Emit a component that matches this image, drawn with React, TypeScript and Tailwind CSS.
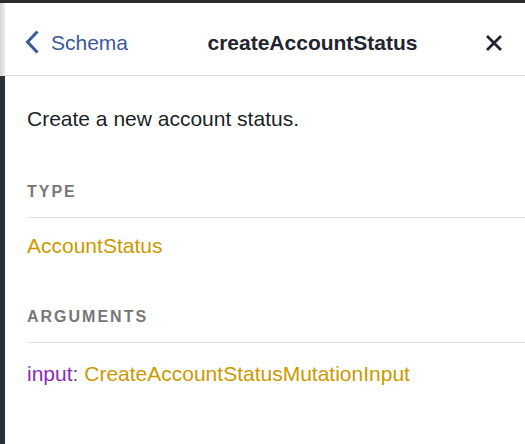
export default function App() {
  return (
    <div className="w-[525px] h-[444px] overflow-hidden bg-white flex flex-col font-['Liberation_Sans',Arial,sans-serif]">
      {/* top edge of the window behind */}
      <div className="h-[3px] bg-[#2b2b2b] shrink-0" />

      <div className="flex flex-1 min-h-0">
        {/* left strip */}
        <div className="w-[5px] flex flex-col shrink-0">
          <div className="h-[73px] bg-gradient-to-r from-[#d4d4d4] to-[#ececec]" />
          <div className="flex-1 bg-[#263238]" />
        </div>

        {/* doc explorer */}
        <div className="flex-1 flex flex-col">
          {/* header */}
          <div className="h-[73px] shrink-0 border-b border-[#dcdcdc] flex items-center pt-[6px] pl-[20px] pr-[22px]">
            <button className="flex items-center gap-[11px] text-[#3b5998] text-[21px] leading-none">
              <svg width="15" height="24" viewBox="0 0 15 24" fill="none">
                <polyline
                  points="12.5,1.5 2.5,12 12.5,22.5"
                  stroke="#3b5998"
                  strokeWidth="3"
                />
              </svg>
              Schema
            </button>
            <div className="flex-1 text-center pl-[12px] text-[21px] font-bold text-[#1f2430] leading-none">
              createAccountStatus
            </div>
            <svg width="18" height="18" viewBox="0 0 18 18" className="mt-[2px]">
              <path d="M2 2 L16 16 M16 2 L2 16" stroke="#1f2430" strokeWidth="2.8" />
            </svg>
          </div>

          {/* body */}
          <div className="pl-[22px] pt-[31px]">
            <p className="text-[21px] leading-[24px] text-[#1b1f27]">Create a new account status.</p>

            <div className="mt-[51px] pb-[15px] border-b border-[#dedede] text-[16px] leading-[20px] font-bold tracking-[2px] text-[#777777]">
              TYPE
            </div>
            <div className="mt-[16px] text-[21px] leading-[24px] text-[#cc9900]">AccountStatus</div>

            <div className="mt-[49px] pb-[15px] border-b border-[#dedede] text-[16px] leading-[20px] font-bold tracking-[2px] text-[#777777]">
              ARGUMENTS
            </div>
            <div className="mt-[19px] text-[21px] leading-[24px]">
              <span className="text-[#8b2bb9]">input</span>
              <span className="text-[#555555]">: </span>
              <span className="text-[#cc9900]">CreateAccountStatusMutationInput</span>
            </div>
          </div>
        </div>
      </div>
    </div>
  );
}
